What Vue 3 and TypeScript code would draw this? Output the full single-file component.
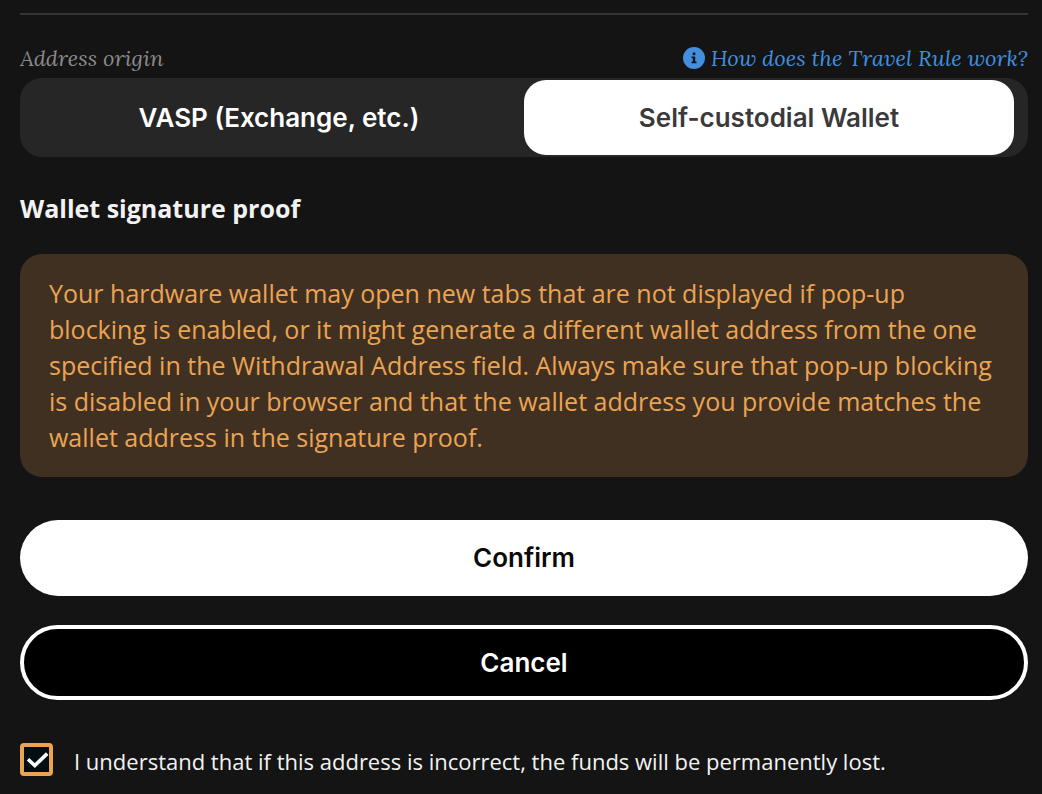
<script setup lang="ts">
import { ref } from 'vue'

type Origin = 'vasp' | 'self'

const options: { id: Origin; label: string }[] = [
  { id: 'vasp', label: 'VASP (Exchange, etc.)' },
  { id: 'self', label: 'Self-custodial Wallet' },
]
const origin = ref<Origin>('self')
const understood = ref(true)
</script>

<template>
  <main class="panel">
    <hr class="divider" />

    <section class="origin">
      <div class="origin-head">
        <span id="origin-label" class="origin-label">Address origin</span>
        <a class="help" href="#travel-rule">
          <svg class="help-icon" viewBox="0 0 22 22" aria-hidden="true">
            <circle cx="11" cy="11" r="11" fill="#418fde" />
            <circle cx="11" cy="6.7" r="1.5" fill="#141414" />
            <path d="M8.6 9.5h3.6v5h1.3v1.8H8.5v-1.8h1.4v-3.2H8.6z" fill="#141414" />
          </svg>
          <span>How does the Travel Rule work?</span>
        </a>
      </div>
      <div class="segments" role="group" aria-labelledby="origin-label">
        <button
          v-for="option in options"
          :key="option.id"
          type="button"
          class="segment"
          :class="{ active: origin === option.id }"
          :aria-pressed="origin === option.id"
          @click="origin = option.id"
        >
          {{ option.label }}
        </button>
      </div>
    </section>

    <h2 class="title">Wallet signature proof</h2>

    <p class="warning">
      Your hardware wallet may open new tabs that are not displayed if pop-up
      blocking is enabled, or it might generate a different wallet address from
      the one specified in the Withdrawal Address field. Always make sure that
      pop-up blocking is disabled in your browser and that the wallet address
      you provide matches the wallet address in the signature proof.
    </p>

    <div class="actions">
      <button type="button" class="action confirm">Confirm</button>
      <button type="button" class="action cancel">Cancel</button>
    </div>

    <label class="consent" for="understood">
      <span class="box">
        <input id="understood" v-model="understood" type="checkbox" />
        <svg v-if="understood" class="tick" viewBox="0 0 26 26" aria-hidden="true">
          <path d="M4 12.2 10.8 18.6 23.2 6.6" fill="none" stroke="#fff" stroke-width="3.6" />
        </svg>
      </span>
      <span>I understand that if this address is incorrect, the funds will be permanently lost.</span>
    </label>
  </main>
</template>

<style>
body {
  margin: 0;
  background: #141414;
}
</style>

<style scoped>
.panel {
  box-sizing: border-box;
  padding: 13px 14px 14px 20px;
  color: #f2f2f2;
  font-family: 'Open Sans', 'Noto Sans', sans-serif;
}

.divider {
  height: 2px;
  margin: 0 0 29px;
  border: 0;
  background: #343434;
}

.origin-head {
  display: flex;
  justify-content: space-between;
  align-items: center;
  height: 28px;
  margin-bottom: 6px;
  font: italic 22px/28px Lora, 'Liberation Serif', serif;
}

.origin-label {
  color: #8a8a8a;
}

.help {
  display: flex;
  align-items: center;
  gap: 6px;
  color: #418fde;
  text-decoration: none;
}

.help-icon {
  width: 22px;
  height: 22px;
}

.segments {
  display: flex;
  padding: 2px 14px;
  border-radius: 22px;
  background: #262626;
}

.segment,
.action {
  box-sizing: border-box;
  border: 0;
  font: 600 26px/32px Inter, sans-serif;
  cursor: pointer;
}

.segment {
  flex: 1;
  height: 75px;
  padding: 0;
  border-radius: 22px;
  background: transparent;
  color: #fff;
}

.segment.active {
  background: #fff;
  color: #3a3a3a;
}

.title {
  margin: 33px 0 27px;
  font-size: 25px;
  line-height: 37px;
  font-weight: 700;
}

.warning {
  margin: 0;
  padding: 21px 28px 22px 29px;
  border-radius: 22px;
  background: #403022;
  color: #eba452;
  font-size: 25px;
  line-height: 36px;
}

.actions {
  display: flex;
  flex-direction: column;
  gap: 29px;
  margin-top: 43px;
}

.action {
  border-radius: 38px;
}

.confirm {
  height: 76px;
  background: #fff;
  color: #0a0a0a;
}

.cancel {
  height: 75px;
  border: 4px solid #fff;
  background: #000;
  color: #fff;
}

.consent {
  display: flex;
  align-items: flex-start;
  gap: 21px;
  margin-top: 43px;
  font-size: 22px;
  line-height: 37px;
}

.box {
  display: grid;
  flex: none;
}

.box > * {
  grid-area: 1 / 1;
  place-self: center;
}

.box input {
  appearance: none;
  box-sizing: border-box;
  width: 33px;
  height: 33px;
  margin: 0;
  border: 4px solid #eba452;
  border-radius: 4px;
  background: #020d14;
}

.tick {
  width: 26px;
  height: 26px;
  pointer-events: none;
}
</style>
